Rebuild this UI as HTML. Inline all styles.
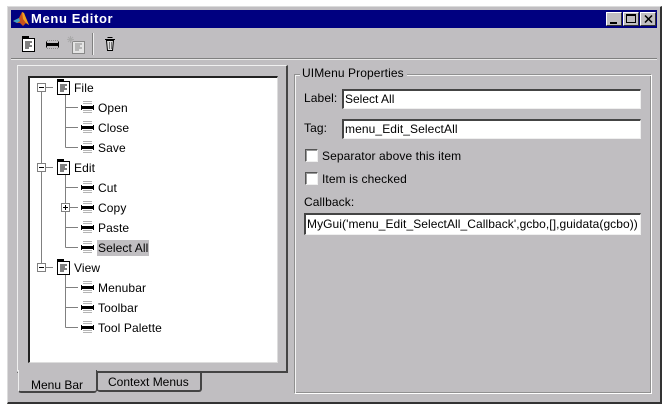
<!DOCTYPE html>
<html><head><meta charset="utf-8"><style>
html,body{margin:0;padding:0;width:667px;height:414px;overflow:hidden;background:#fff}
body{position:relative;font-family:"Liberation Sans",sans-serif;font-size:12px;color:#000;letter-spacing:.1px}
div{position:absolute;box-sizing:border-box}
.t{white-space:nowrap;line-height:14px;height:14px}
.f{background:#fff;border-top:2px solid #444;border-left:2px solid #444;border-right:1px solid #efefef;border-bottom:1px solid #efefef;white-space:nowrap;overflow:hidden;padding-left:1px}
.c{width:13px;height:13px;background:#fff;border-top:1px solid #555;border-left:1px solid #555;border-right:1px solid #eee;border-bottom:1px solid #eee;box-shadow:inset 1px 1px 0 #999}
</style></head><body>
<div style="left:7px;top:6px;width:655px;height:398px;background:#c0bec1;border-top:1px solid #dcdcdc;border-left:1px solid #dcdcdc;border-right:2px solid #333;border-bottom:2px solid #333"></div>
<div style="left:11px;top:10px;width:646px;height:18px;background:#000080"></div>
<svg style="position:absolute;left:12px;top:11px" width="18" height="17" viewBox="0 0 18 17"><path d="M1 10L7 7 10 1 12 2 14 7 17 14 14 12 11 15 8 12 5 12Z" fill="#c8501c"/><path d="M10 1L12 2 14 7 17 14 14 12 11 8Z" fill="#f0a020"/><path d="M1 10L7 7 8 10 5 12Z" fill="#40a0c0"/></svg>
<div class="t" style="left:31px;top:12px;color:#fff;font-weight:bold;font-size:13px;letter-spacing:.65px">Menu Editor</div>
<div style="left:606px;top:12px;width:16px;height:14px;background:#c0bec1;border:1px solid;border-color:#fff #333 #333 #fff"><div style="left:3px;bottom:1px;width:7px;height:2px;background:#000"></div></div>
<div style="left:623px;top:12px;width:16px;height:14px;background:#c0bec1;border:1px solid;border-color:#fff #333 #333 #fff"><div style="left:2px;top:1px;width:10px;height:9px;border:1px solid #000;border-top-width:2px"></div></div>
<div style="left:640px;top:12px;width:16px;height:14px;background:#c0bec1;border:1px solid;border-color:#fff #333 #333 #fff"><svg style="position:absolute;left:3px;top:2px" width="9" height="8"><path d="M1 0.5L8 7.5M8 0.5L1 7.500" stroke="#000" stroke-width="1.5"/></svg></div>
<div style="left:11px;top:58px;width:646px;height:1px;background:#808080"></div>
<div style="left:11px;top:59px;width:646px;height:1px;background:#e8e8e8"></div>
<div style="left:92px;top:33px;width:1px;height:22px;background:#808080"></div>
<div style="left:93px;top:33px;width:1px;height:22px;background:#eee"></div>

<svg style="position:absolute;left:0;top:0" width="130" height="60">
<path d="M22.500 38.500H34.500V51.500H22.500Z" fill="#fff" stroke="#000"/><path d="M22 36h7v3h-7z" fill="#000"/><path d="M25 42h7M25 44h5M25 46h7M25 48h4" stroke="#000"/>
<path d="M47 40.500h11M47 48.500h11" stroke="#888" stroke-dasharray="1 1"/><path d="M46 43h13v3H46z" fill="#000"/><path d="M46.500 41.500v6M58.500 41.500v6" stroke="#000"/>
<path d="M72.500 41.500H84.500V53.500H72.500Z" fill="#e4e4e4" stroke="#888"/><path d="M75 44h7M75 46h5M75 48h7M75 50h4" stroke="#888"/><path d="M68 37l5 5M73 37l-5 5M70.500 36v7M67 39.500h7" stroke="#aaa"/>
<path d="M105 39.500h10" stroke="#000"/><path d="M107.500 37.500h5" stroke="#000"/><path d="M106.500 40.500L107.500 50.500H112.500L113.500 40.500Z" fill="#ddd" stroke="#000"/><path d="M109.500 42v7M111.500 42v7" stroke="#777"/>
</svg>

<!-- left panel -->
<div style="left:17px;top:65px;width:271px;height:308px;border-top:1px solid #f0f0f0;border-left:1px solid #f0f0f0;border-right:2px solid #444;border-bottom:2px solid #444"></div>
<div style="left:28px;top:76px;width:250px;height:287px;background:#fff;border-top:2px solid #222;border-left:2px solid #222;border-right:1px solid #ddd;border-bottom:1px solid #ddd"></div>
<!-- tabs -->
<div style="left:18px;top:370px;width:79px;height:23px;background:#c0bec1;border-left:1px solid #eee;border-right:1px solid #444;border-bottom:2px solid #444;border-radius:0 0 3px 3px"></div>
<div style="left:97px;top:372px;width:105px;height:20px;background:#c0bec1;border-top:1px solid #444;border-left:1px solid #eee;border-right:2px solid #444;border-bottom:2px solid #444;border-radius:0 0 3px 3px"></div>
<div style="left:97px;top:372px;width:1px;height:19px;background:#444"></div>
<div class="t" style="left:31px;top:378px;letter-spacing:0">Menu Bar</div>
<div class="t" style="left:108px;top:375px;letter-spacing:0">Context Menus</div>

<!-- tree -->
<svg style="position:absolute;left:0;top:0" width="300" height="350">
<defs>
<g id="m"><path d="M2 .500H11M2 2.500H11M2 9.500H11M2 11.500H11" stroke="#b4b4b4"/><path d="M0 5h13v3H0z" fill="#000"/><path d="M0.500 4v5M12.500 4v5" stroke="#000"/></g>
<g id="d"><path d="M.5 2.500H12.500V15.500H.5Z" fill="#fff" stroke="#000"/><path d="M0 0h7v3H0z" fill="#000"/><path d="M3 6h7M3 8h5M3 10h7M3 12h4" stroke="#000"/></g>
<g id="minus"><path d="M.5 .5h8v8H.5z" fill="#fff" stroke="#808080"/><path d="M2 4.500h5" stroke="#000"/></g>
<g id="plus"><path d="M.5 .5h8v8H.5z" fill="#fff" stroke="#808080"/><path d="M2 4.500h5M4.500 2v5" stroke="#000"/></g>
</defs>
<g stroke="#808080" fill="none">
<path d="M41.500 92V268M46 87.500H53M46 167.500H53M46 267.500H53"/>
<path d="M65.500 95V147.500M65.500 107.500H78M65.500 127.500H78M65.500 147.500H78"/>
<path d="M65.500 175V247.500M65.500 187.500H78M70 207.500H78M65.500 227.500H78M65.500 247.500H78"/>
<path d="M65.500 275V327.500M65.500 287.500H78M65.500 307.500H78M65.500 327.500H78"/>
</g>
<use href="#minus" x="37" y="83"/><use href="#minus" x="37" y="163"/><use href="#minus" x="37" y="263"/>
<use href="#d" x="57" y="79"/><use href="#d" x="57" y="159"/><use href="#d" x="57" y="259"/>
<use href="#plus" x="61" y="203"/>
<use href="#m" x="81" y="101"/><use href="#m" x="81" y="121"/><use href="#m" x="81" y="141"/>
<use href="#m" x="81" y="181"/><use href="#m" x="81" y="201"/><use href="#m" x="81" y="221"/><use href="#m" x="81" y="241"/>
<use href="#m" x="81" y="281"/><use href="#m" x="81" y="301"/><use href="#m" x="81" y="321"/>
</svg>
<div style="left:97px;top:240px;width:52px;height:16px;background:#c0bec1"></div>
<div class="t" style="left:74px;top:81px">File</div>
<div class="t" style="left:98px;top:101px">Open</div>
<div class="t" style="left:98px;top:121px">Close</div>
<div class="t" style="left:98px;top:141px">Save</div>
<div class="t" style="left:74px;top:161px">Edit</div>
<div class="t" style="left:98px;top:181px">Cut</div>
<div class="t" style="left:98px;top:201px">Copy</div>
<div class="t" style="left:98px;top:221px">Paste</div>
<div class="t" style="left:98px;top:241px">Select All</div>
<div class="t" style="left:74px;top:261px">View</div>
<div class="t" style="left:98px;top:281px">Menubar</div>
<div class="t" style="left:98px;top:301px">Toolbar</div>
<div class="t" style="left:98px;top:321px">Tool Palette</div>

<!-- right group -->
<div style="left:294px;top:74px;width:358px;height:320px;border:1px solid #909090;border-right-color:#fff;border-bottom-color:#fff;box-shadow:inset 1px 1px 0 #f4f4f4,inset -1px -1px 0 #909090"></div>
<div class="t" style="left:300px;top:66px;background:#c0bec1;padding:0 3px 0 2px">UIMenu Properties</div>
<div class="t" style="left:304px;top:91px">Label:</div>
<div class="t" style="left:304px;top:121px">Tag:</div>
<div class="f" style="left:342px;top:89px;width:299px;height:20px;line-height:17px;letter-spacing:0">Select All</div>
<div class="f" style="left:342px;top:119px;width:299px;height:20px;line-height:17px">menu_Edit_SelectAll</div>
<div class="c" style="left:305px;top:149px"></div>
<div class="t" style="left:322px;top:149px">Separator above this item</div>
<div class="c" style="left:305px;top:172px"></div>
<div class="t" style="left:322px;top:172px">Item is checked</div>
<div class="t" style="left:304px;top:195px">Callback:</div>
<div class="f" style="left:304px;top:213px;width:337px;height:22px;line-height:19px;letter-spacing:.07px">MyGui('menu_Edit_SelectAll_Callback',gcbo,[],guidata(gcbo))</div>
</body></html>
